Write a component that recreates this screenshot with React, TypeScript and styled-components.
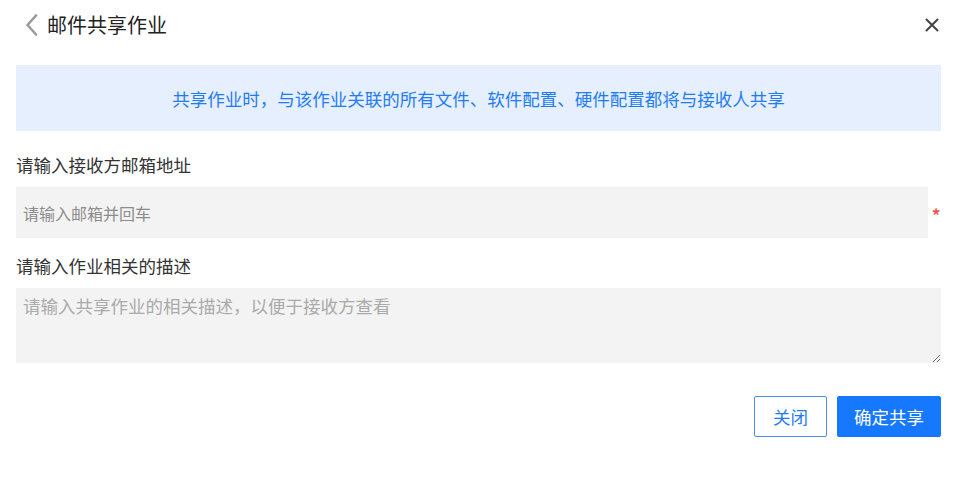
import styled, { createGlobalStyle } from "styled-components";

const GlobalStyle = createGlobalStyle`
  *,*::before,*::after{ box-sizing:border-box; }
  html,body{ margin:0; background:#ffffff; }
  body{
    font-family: "Noto Sans CJK SC", "Noto Sans", sans-serif;
    color:#333;
    -webkit-font-smoothing:antialiased;
  }
`;

/* --- dialog shell --- */
const Dialog = styled.div`
  width: 955px;
  height: 477px;
  padding: 0 14px 0 16px;
  display: flex;
  flex-direction: column;
`;

const Header = styled.header`
  height: 50px;
  display: flex;
  align-items: center;
  justify-content: space-between;
`;

const TitleGroup = styled.div`
  display: flex;
  align-items: center;
  gap: 8px;
  padding-left: 9px;
`;

const Title = styled.h1`
  margin: 0;
  font-size: 20px;
  font-weight: 400;
  color: #222;
  line-height: 1;
`;

const IconButton = styled.button`
  border: 0;
  background: none;
  padding: 0;
  display: flex;
  cursor: pointer;
`;

/* --- info banner --- */
const Notice = styled.div`
  margin-top: 15px;
  height: 66px;
  background: #e6effd;
  color: #1f7cf6;
  font-size: 17.5px;
  display: flex;
  align-items: center;
  justify-content: center;
`;

/* --- form --- */
const Label = styled.label<{ $top: number }>`
  display: block;
  margin-top: ${(p) => p.$top}px;
  font-size: 17.5px;
  line-height: 24px;
  color: #333;
`;

const FieldRow = styled.div`
  margin-top: 10px;
  display: flex;
  align-items: center;
`;

const Input = styled.input`
  flex: 1;
  height: 51px;
  border: 0;
  outline: none;
  background: #f3f3f3;
  padding: 0 7px;
  font-family: inherit;
  font-size: 16px;
  color: #333;
  &::placeholder{ color: #8c8c8c; }
`;

const Required = styled.span`
  width: 13px;
  text-align: right;
  color: #f5474a;
  font-size: 21px;
  line-height: 1;
  padding-top: 7px;
`;

const TextArea = styled.textarea`
  margin-top: 10px;
  height: 75px;
  border: 0;
  outline: none;
  background: #f3f3f3;
  padding: 5px 7px;
  font-family: inherit;
  font-size: 17.5px;
  line-height: 26px;
  color: #333;
  resize: vertical;
  &::placeholder{ color: #aaaaaa; }
`;

const Actions = styled.div`
  margin-top: 33px;
  display: flex;
  justify-content: flex-end;
  gap: 10px;
`;

const Button = styled.button<{ $primary?: boolean }>`
  height: 41px;
  padding: 0 ${(p) => (p.$primary ? 16 : 18)}px;
  border-radius: 2px;
  font-family: inherit;
  font-size: 17.5px;
  cursor: pointer;
  border: 1px solid ${(p) => (p.$primary ? "#1677ff" : "#4b8ff5")};
  background: ${(p) => (p.$primary ? "#1677ff" : "#fff")};
  color: ${(p) => (p.$primary ? "#fff" : "#1f7cf6")};
`;

function BackIcon() {
  return (
    <svg width="14" height="22" viewBox="0 0 14 22" fill="none">
      <polyline points="11,1.5 2.5,11 11,20.5" stroke="#9a9a9a" strokeWidth="2.6" strokeLinecap="round" strokeLinejoin="round" />
    </svg>
  );
}

function CloseIcon() {
  return (
    <svg width="14" height="14" viewBox="0 0 14 14" fill="none">
      <path d="M1.5 1.5 L12.5 12.5 M12.5 1.5 L1.5 12.5" stroke="#444" strokeWidth="2" strokeLinecap="round" />
    </svg>
  );
}

export default function App() {
  return (
    <>
      <GlobalStyle />
      <Dialog>
        <Header>
          <TitleGroup>
            <IconButton aria-label="返回">
              <BackIcon />
            </IconButton>
            <Title>邮件共享作业</Title>
          </TitleGroup>
          <IconButton aria-label="关闭" style={{ marginRight: 2 }}>
            <CloseIcon />
          </IconButton>
        </Header>

        <Notice>共享作业时，与该作业关联的所有文件、软件配置、硬件配置都将与接收人共享</Notice>

        <Label $top={22}>请输入接收方邮箱地址</Label>
        <FieldRow>
          <Input placeholder="请输入邮箱并回车" />
          <Required>*</Required>
        </FieldRow>

        <Label $top={16}>请输入作业相关的描述</Label>
        <TextArea placeholder="请输入共享作业的相关描述，以便于接收方查看" />

        <Actions>
          <Button>关闭</Button>
          <Button $primary>确定共享</Button>
        </Actions>
      </Dialog>
    </>
  );
}
